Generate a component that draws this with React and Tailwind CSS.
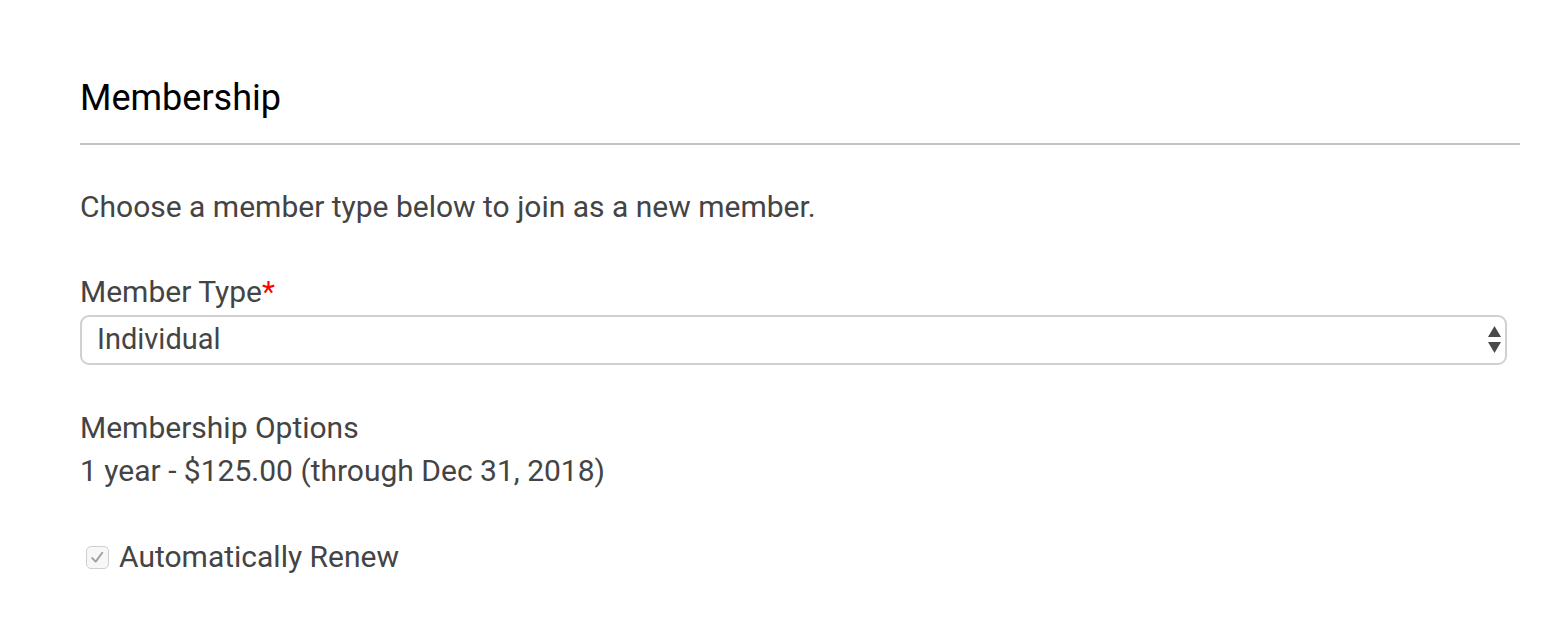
import React, { useState } from "react";

const App = () => {
  const [memberType, setMemberType] = useState("Individual");

  return (
    <div className="min-h-screen bg-white px-[80px] pt-[70px] text-[#444]" style={{ fontFamily: "Roboto, 'Liberation Sans', sans-serif" }}>
      <div className="w-[1440px]">
        {/* Header */}
        <h2 className="text-[36px] leading-[56px] font-normal text-black">Membership</h2>
        <div className="mt-[17px] h-[2px] bg-[#c4c4c4]" />

        <p className="mt-[42px] text-[30px] leading-[40px]">
          Choose a member type below to join as a new member.
        </p>

        {/* Member Type */}
        <div className="mt-[47px]">
          <label className="block text-[30px] leading-[36px]">
            Member Type<span className="text-[#ff0000]">*</span>
          </label>
          <div className="relative mt-[5px] w-[1427px]">
            <select
              value={memberType}
              onChange={e => setMemberType(e.target.value)}
              className="h-[50px] w-full appearance-none rounded-[9px] border-2 border-[#d0d0d0] bg-white pl-[15px] text-[29px] text-[#444] outline-none"
            >
              <option>Individual</option>
              <option>Family</option>
              <option>Student</option>
            </select>
            <svg className="pointer-events-none absolute right-[5px] top-[11px] h-[28px] w-[15px]" viewBox="0 0 15 28">
              <path d="M7.5 0 L14 11 H1 Z" fill="#4a4a4a" />
              <path d="M1 16 H14 L7.5 27 Z" fill="#4a4a4a" />
            </svg>
          </div>
        </div>

        {/* Membership Options */}
        <div className="mt-[45px]">
          <div className="text-[30px] leading-[36px]">Membership Options</div>
          <div className="mt-[7px] text-[30px] leading-[36px]">1 year - $125.00 (through Dec 31, 2018)</div>
        </div>

        {/* Auto renew */}
        <label className="mt-[50px] ml-[6px] flex items-center gap-[10px] text-[30px] leading-[36px]">
          <span className="flex h-[23px] w-[23px] shrink-0 items-center justify-center rounded-[5px] border border-[#cfcfcf] bg-[#f7f7f7]">
            <svg viewBox="0 0 16 16" className="h-[19px] w-[19px]">
              <path d="M3.5 8.5 L6.5 11.5 L12 4" fill="none" stroke="#a0a0a0" strokeWidth="1.6" strokeLinecap="round" strokeLinejoin="round" />
            </svg>
          </span>
          Automatically Renew
        </label>
      </div>
    </div>
  );
};

export default App;
